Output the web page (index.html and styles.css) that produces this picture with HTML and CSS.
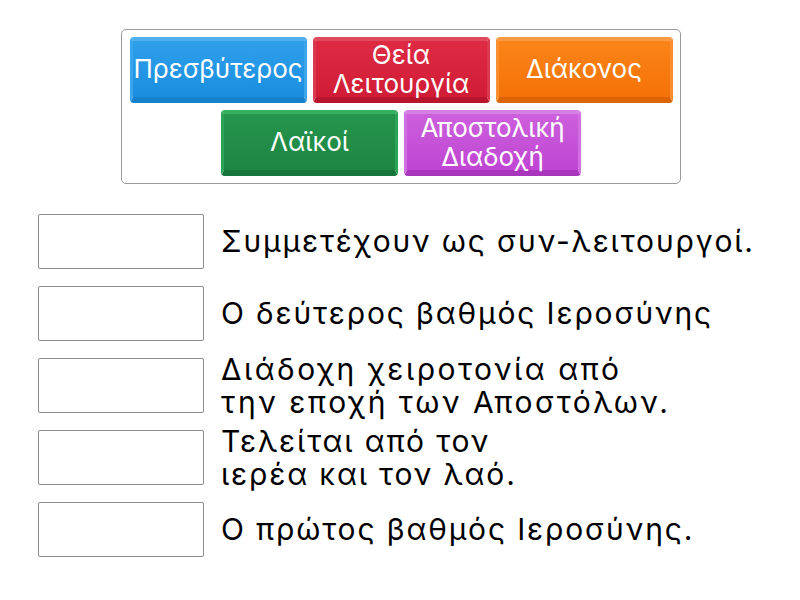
FILE: index.html
```html
<!DOCTYPE html>
<html lang="el">
<head>
<meta charset="utf-8">
<link rel="stylesheet" href="styles.css">
</head>
<body>
<div class="page">
  <div class="bank">
    <div class="bank-row">
      <div class="tile blue">Πρεσβύτερος</div>
      <div class="tile red">Θεία<br>Λειτουργία</div>
      <div class="tile orange">Διάκονος</div>
    </div>
    <div class="bank-row">
      <div class="tile green">Λαϊκοί</div>
      <div class="tile purple">Αποστολική<br>Διαδοχή</div>
    </div>
  </div>
  <div class="list">
    <div class="item"><div class="slot"></div><div class="text">Συμμετέχουν ως συν-λειτουργοί.</div></div>
    <div class="item"><div class="slot"></div><div class="text">Ο δεύτερος βαθμός Ιεροσύνης</div></div>
    <div class="item"><div class="slot"></div><div class="text wide">Διάδοχη χειροτονία από<br>την εποχή των Αποστόλων.</div></div>
    <div class="item"><div class="slot"></div><div class="text">Τελείται από τον<br>ιερέα και τον λαό.</div></div>
    <div class="item"><div class="slot"></div><div class="text">Ο πρώτος βαθμός Ιεροσύνης.</div></div>
  </div>
</div>
</body>
</html>
```

FILE: styles.css
```css
html, body {
  margin: 0;
  padding: 0;
  background: #fff;
}
.page {
  padding-top: 29px;
  display: flex;
  flex-direction: column;
}
.bank {
  align-self: flex-start;
  margin-left: 121px;
  width: 544px;
  padding: 7px;
  border: 1px solid #9a9a9a;
  border-radius: 5px;
  display: flex;
  flex-direction: column;
  gap: 7px;
}
.bank-row {
  display: flex;
  justify-content: center;
  gap: 6px;
}
.tile {
  box-sizing: border-box;
  width: 177px;
  height: 66px;
  border-radius: 4px;
  display: flex;
  align-items: center;
  justify-content: center;
  text-align: center;
  color: #fff;
  font-family: "Inter", "Noto Sans", sans-serif;
  font-size: 26px;
  line-height: 29px;
  padding-bottom: 1px;
  border-style: solid;
  border-width: 4px 3px 6px 3px;
  white-space: nowrap;
}
.tile.blue { background: linear-gradient(#2f9fea, #1a8ee0); border-color: #4fb0ef #3aa5ec #1580cc #3aa5ec; }
.tile.red { background: linear-gradient(#de2a42, #d01c36); border-color: #e04a5e #da3a50 #b8152d #da3a50; }
.tile.orange { background: linear-gradient(#fb8418, #f47208); border-color: #fc9a44 #fb8f30 #dc6404 #fb8f30; }
.tile.green { background: linear-gradient(#26954d, #1d8643); border-color: #34b060 #2ca456 #17753a #2ca456; }
.tile.purple { background: linear-gradient(#cc60dc, #bf45d3); border-color: #d780e4 #d070e0 #aa35bd #d070e0; }
.list {
  margin-top: 30px;
  margin-left: 38px;
  display: flex;
  flex-direction: column;
  gap: 17px;
}
.item {
  display: flex;
  align-items: center;
  height: 55px;
}
.slot {
  box-sizing: border-box;
  width: 166px;
  height: 55px;
  border: 1px solid #8c8c8c;
  border-radius: 2px;
  flex: none;
}
.text {
  margin-left: 17px;
  font-family: "Inter", "Liberation Sans", sans-serif;
  font-size: 30px;
  line-height: 33px;
  letter-spacing: 1.85px;
  color: #000;
  white-space: nowrap;
}
.text.wide {
  letter-spacing: 2.5px;
}
```
